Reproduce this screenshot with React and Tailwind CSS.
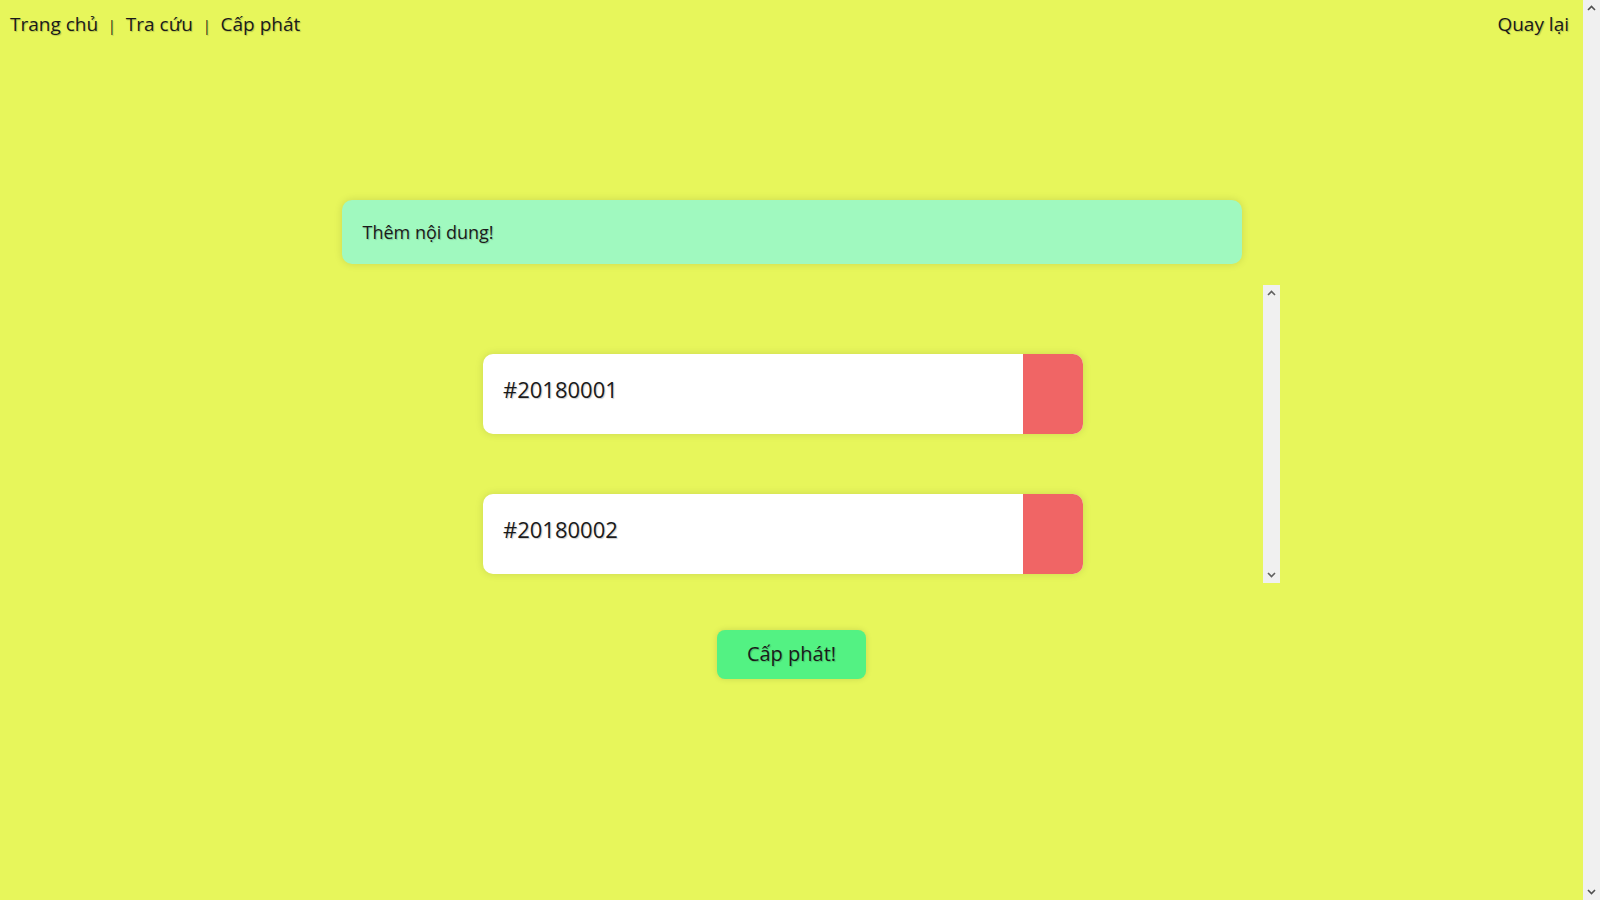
import React from "react";

const Arrow = ({ up, color = "#505050" }) => (
  <svg width="9" height="6" viewBox="0 0 9 6" className="block">
    {up ? (
      <path d="M1 5 L4.5 1.5 L8 5" fill="none" stroke={color} strokeWidth="1.6" />
    ) : (
      <path d="M1 1 L4.5 4.5 L8 1" fill="none" stroke={color} strokeWidth="1.6" />
    )}
  </svg>
);

// fake classic scrollbar track (no thumb)
const Track = ({ color }) => (
  <div className="w-[17px] shrink-0 bg-[#f0f0f0] flex flex-col justify-between items-center py-[5px]">
    <Arrow up color={color} />
    <Arrow color={color} />
  </div>
);

const shadowText = "[text-shadow:1px_1px_1px_rgba(0,0,0,0.2)]";

const Row = ({ code }) => (
  <div className="w-[600px] h-[80px] flex rounded-[10px] overflow-hidden bg-white shadow-[0_0_8px_rgba(0,0,0,0.12)]">
    <div className={`flex-1 flex items-center pl-5 pb-2 text-[22px] text-[#1a1a1a] ${shadowText}`}>
      {code}
    </div>
    <div className="w-[60px] bg-[#f06565]" />
  </div>
);

export default function App() {
  const codes = ["#20180001", "#20180002"];

  return (
    <div
      className="flex h-screen w-full overflow-hidden bg-[#e7f65b]"
      style={{ fontFamily: '"Open Sans", "Noto Sans", sans-serif' }}
    >
      <div className="flex-1 flex flex-col">
        {/* top nav */}
        <div className={`flex justify-between items-center pl-[10px] pr-[14px] pt-[10px] text-[19px] text-[#1a1a1a] ${shadowText}`}>
          <div className="flex items-center">
            <span>Trang chủ</span>
            <span className="mx-[10px] text-sm mt-1">|</span>
            <span>Tra cứu</span>
            <span className="mx-[10px] text-sm mt-1">|</span>
            <span>Cấp phát</span>
          </div>
          <span>Quay lại</span>
        </div>

        {/* alert */}
        <div className={`mt-[161px] mx-auto w-[900px] h-[64px] flex items-center pl-[21px] pr-[19px] rounded-[10px] bg-[#a0f9bf] text-lg text-[#1a1a1a] shadow-[0_0_8px_rgba(0,0,0,0.12)] ${shadowText}`}>
          Thêm nội dung!
        </div>

        {/* list */}
        <div className="mt-[21px] mx-auto w-[977px] h-[298px] flex">
          <div className="flex-1 flex flex-col items-center gap-[60px] pt-[69px]">
            {codes.map((c) => (
              <Row key={c} code={c} />
            ))}
          </div>
          <Track color="#606060" />
        </div>

        <div className="mt-[47px] flex justify-center">
          <button className={`w-[149px] h-[49px] rounded-[8px] bg-[#53f283] text-xl text-[#1a1a1a] shadow-[0_0_6px_rgba(0,0,0,0.12)] ${shadowText}`}>
            Cấp phát!
          </button>
        </div>
      </div>
      <Track color="#505050" />
    </div>
  );
}
